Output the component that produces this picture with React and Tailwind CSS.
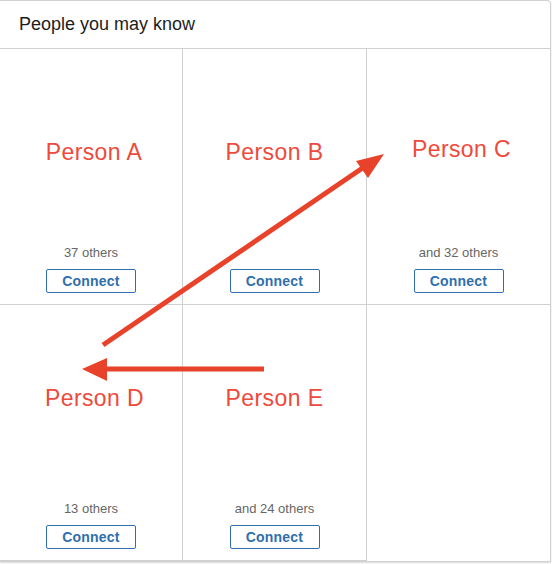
import React from 'react';

const people = [
  { name: 'Person A', mutual: '37 others', top: 'mt-[92px] ml-[6px]' },
  { name: 'Person B', mutual: '', top: 'mt-[92px]' },
  { name: 'Person C', mutual: 'and 32 others', top: 'mt-[89px] ml-[6px]' },
  { name: 'Person D', mutual: '13 others', top: 'mt-[82px] ml-[7px]' },
  { name: 'Person E', mutual: 'and 24 others', top: 'mt-[82px]' },
];

function PersonCard({ person, last }) {
  return (
    <div
      className={`h-[256px] border-b border-[#d0d0d0] flex flex-col items-center ${
        last ? '' : 'border-r'
      }`}
    >
      <div className={`text-[23px] leading-none tracking-[0.4px] text-[#ee4a3c] ${person.top}`}>
        {person.name}
      </div>
      <div className="flex-1" />
      <div className="h-[16px] text-[13px] leading-[16px] text-[#666666]">{person.mutual}</div>
      <button className="mt-[8px] mb-[11px] w-[90px] h-[24px] border border-[#2f6fad] rounded-[2px] text-[14px] font-bold tracking-[0.2px] text-[#2f6fad] leading-none">
        Connect
      </button>
    </div>
  );
}

export default function App() {
  return (
    <div className="bg-white w-[552px] h-[564px] font-['Liberation_Sans',Arial,sans-serif]">
      <div className="relative w-[551px] border-t border-r border-b border-[#d0d0d0] rounded-tr-[4px] shadow-[0_1px_2px_rgba(0,0,0,0.15)]">
        <div className="h-[48px] border-b border-[#d0d0d0] flex items-center pl-[19px] text-[18px] text-[#1d1d1d]">
          People you may know
        </div>
        <div className="grid grid-cols-[183px_184px_183px]">
          {people.map((p, i) => (
            <PersonCard key={p.name} person={p} last={i === 2} />
          ))}
          <div className="h-[256px] border-l border-[#d0d0d0] -ml-px" />
        </div>

        {/* annotation arrows drawn over the cards */}
        <svg
          className="absolute left-0 top-0 pointer-events-none"
          width="552"
          height="564"
          viewBox="0 0 552 564"
        >
          <line x1="103" y1="344" x2="364" y2="166" stroke="#e8432a" strokeWidth="5" />
          <polygon points="384,153 356,160 368,177" fill="#e8432a" />
          <line x1="264" y1="368" x2="104" y2="368" stroke="#e8432a" strokeWidth="5" />
          <polygon points="82,368 107,357 107,380" fill="#e8432a" />
        </svg>
      </div>
    </div>
  );
}
